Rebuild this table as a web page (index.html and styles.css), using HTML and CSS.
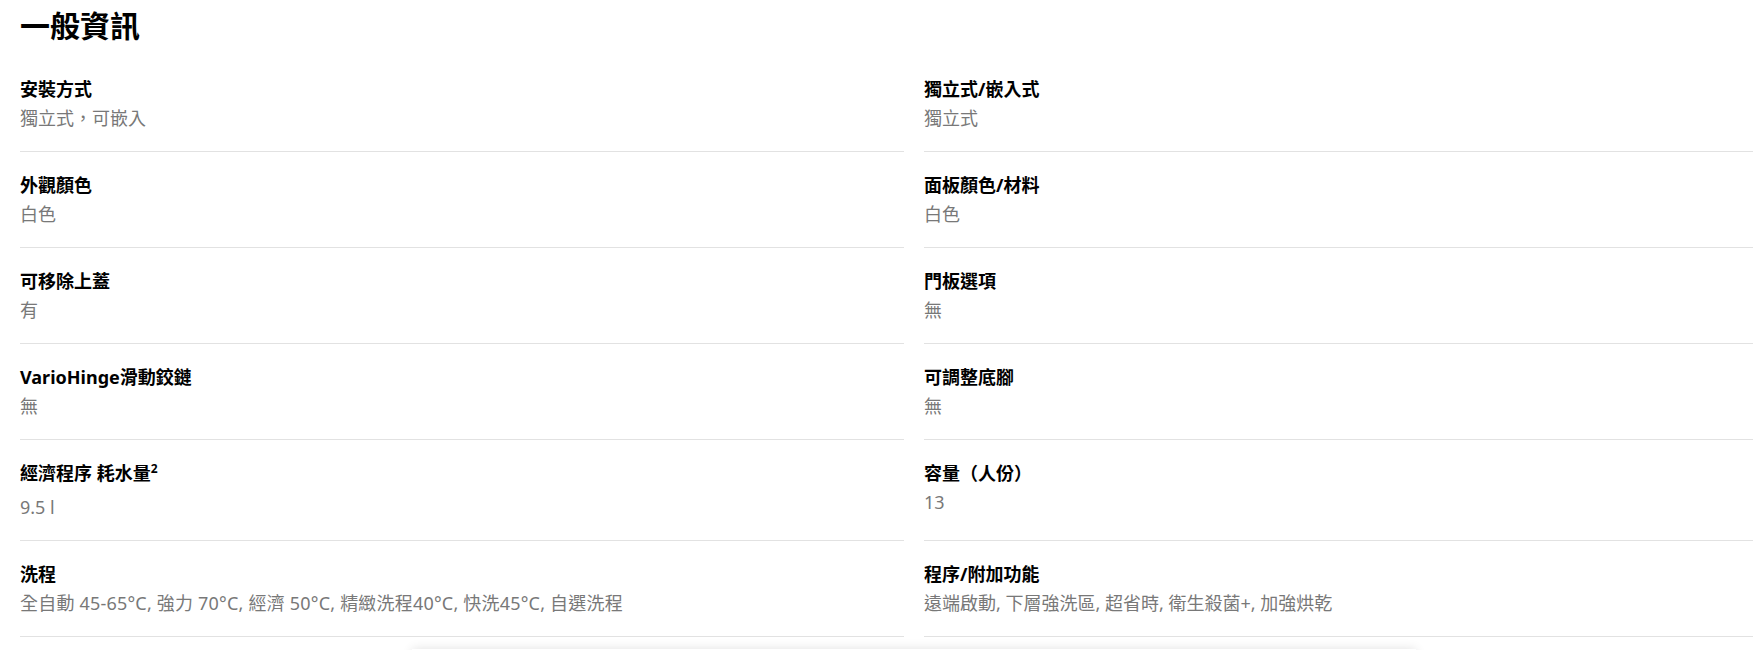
FILE: index.html
```html
<!DOCTYPE html>
<html>
    <head>
        <meta charset="utf-8">
        <meta name="viewport" content="width=device-width, initial-scale=1.0">
        <title>一般資訊</title>
        <link rel="stylesheet" href="styles.css">
    </head>
    <body>
        <div class="specs">
            <h2 class="specs-title">一般資訊</h2>
            <div class="specs-grid">
                <div class="spec">
                    <div class="spec-label">安裝方式</div>
                    <div class="spec-value">獨立式，可嵌入</div>
                </div>
                <div class="spec">
                    <div class="spec-label">獨立式/嵌入式</div>
                    <div class="spec-value">獨立式</div>
                </div>
                <div class="spec">
                    <div class="spec-label">外觀顏色</div>
                    <div class="spec-value">白色</div>
                </div>
                <div class="spec">
                    <div class="spec-label">面板顏色/材料</div>
                    <div class="spec-value">白色</div>
                </div>
                <div class="spec">
                    <div class="spec-label">可移除上蓋</div>
                    <div class="spec-value">有</div>
                </div>
                <div class="spec">
                    <div class="spec-label">門板選項</div>
                    <div class="spec-value">無</div>
                </div>
                <div class="spec">
                    <div class="spec-label">VarioHinge滑動鉸鏈</div>
                    <div class="spec-value">無</div>
                </div>
                <div class="spec">
                    <div class="spec-label">可調整底腳</div>
                    <div class="spec-value">無</div>
                </div>
                <div class="spec">
                    <div class="spec-label">經濟程序 耗水量<sup>2</sup></div>
                    <div class="spec-value spec-value-low">9.5 l</div>
                </div>
                <div class="spec">
                    <div class="spec-label">容量（人份）</div>
                    <div class="spec-value">13</div>
                </div>
                <div class="spec">
                    <div class="spec-label">洗程</div>
                    <div class="spec-value spec-value-wide">全自動 45-65°C, 強力 70°C, 經濟 50°C, 精緻洗程40°C, 快洗45°C, 自選洗程</div>
                </div>
                <div class="spec">
                    <div class="spec-label">程序/附加功能</div>
                    <div class="spec-value">遠端啟動, 下層強洗區, 超省時, 衛生殺菌+, 加強烘乾</div>
                </div>
            </div>
            <div class="compare-bar"></div>
        </div>
    </body>
</html>
```

FILE: styles.css
```css
*{
    padding: 0;
    margin: 0;
    box-sizing: border-box;
}
html { overflow: hidden; }
body {
    font-family: "Noto Sans", "Noto Sans CJK TC", sans-serif;
    color: #000;
    background: #fff;
}
.specs{
    width: 1808px;
    padding: 6px 0 0 20px;
}
.specs-title{
    font-size: 30px;
    line-height: 40px;
    font-weight: 700;
    margin-bottom: 10px;
}
.specs-grid{
    display: grid;
    grid-template-columns: 884px 884px;
    column-gap: 20px;
}
.spec{
    padding: 20px 0 20px;
    border-bottom: 1px solid #e2e2e2;
}
.spec-label{
    font-size: 18px;
    line-height: 26px;
    font-weight: 700;
}
.spec-label sup{
    font-size: 12px;
    line-height: 0;
}
.spec-value{
    margin-top: 3px;
    font-size: 18px;
    line-height: 26px;
    color: #787878;
}
.spec-value-low{
    margin-top: 8px;
}
.spec-value-wide{
    letter-spacing: 0.2px;
}
.compare-bar{
    width: 1004px;
    height: 60px;
    margin: 12px auto 0;
    background: #fff;
    box-shadow: 0 0 10px rgba(0,0,0,0.12);
}
```
